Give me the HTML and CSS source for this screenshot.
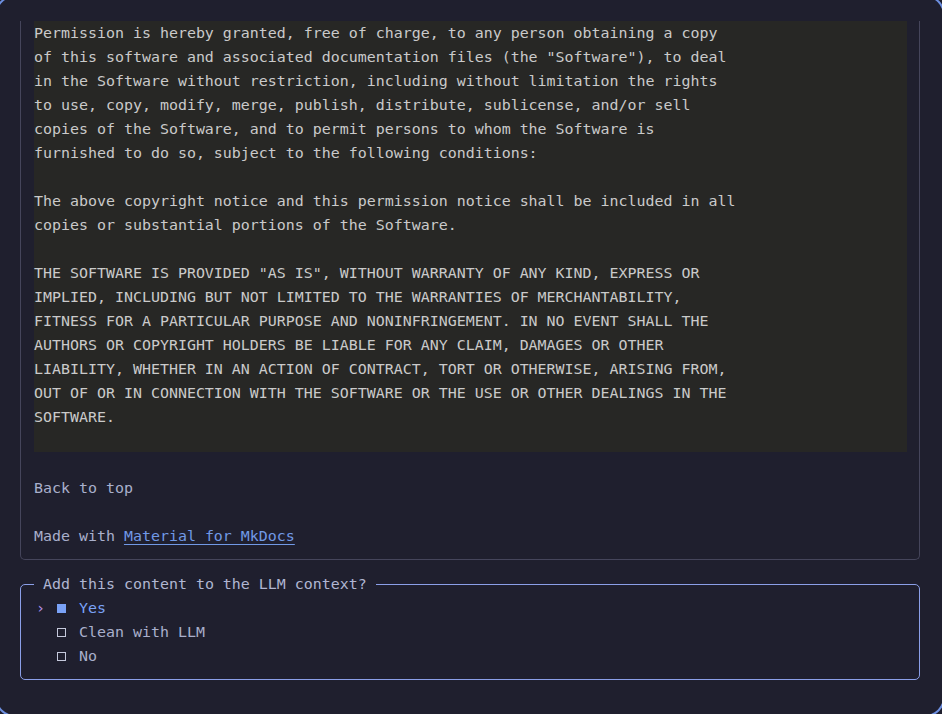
FILE: index.html
```html
<!DOCTYPE html>
<html>
<head>
<meta charset="utf-8">
<link rel="stylesheet" href="styles.css">
</head>
<body>
<div class="screen">
  <div class="panel">
<pre class="code">Permission is hereby granted, free of charge, to any person obtaining a copy
of this software and associated documentation files (the "Software"), to deal
in the Software without restriction, including without limitation the rights
to use, copy, modify, merge, publish, distribute, sublicense, and/or sell
copies of the Software, and to permit persons to whom the Software is
furnished to do so, subject to the following conditions:

The above copyright notice and this permission notice shall be included in all
copies or substantial portions of the Software.

THE SOFTWARE IS PROVIDED "AS IS", WITHOUT WARRANTY OF ANY KIND, EXPRESS OR
IMPLIED, INCLUDING BUT NOT LIMITED TO THE WARRANTIES OF MERCHANTABILITY,
FITNESS FOR A PARTICULAR PURPOSE AND NONINFRINGEMENT. IN NO EVENT SHALL THE
AUTHORS OR COPYRIGHT HOLDERS BE LIABLE FOR ANY CLAIM, DAMAGES OR OTHER
LIABILITY, WHETHER IN AN ACTION OF CONTRACT, TORT OR OTHERWISE, ARISING FROM,
OUT OF OR IN CONNECTION WITH THE SOFTWARE OR THE USE OR OTHER DEALINGS IN THE
SOFTWARE.
</pre>
    <p class="line gap">Back to top</p>
    <p class="line gap">Made with <a class="link" href="#">Material for MkDocs</a></p>
  </div>
  <fieldset class="prompt">
    <legend class="legend">Add this content to the LLM context?</legend>
    <div class="option selected">
      <span class="cursor">›</span>
      <span class="box"><span class="check filled"></span></span>
      <span class="label">Yes</span>
    </div>
    <div class="option">
      <span class="cursor"></span>
      <span class="box"><span class="check"></span></span>
      <span class="label">Clean with LLM</span>
    </div>
    <div class="option">
      <span class="cursor"></span>
      <span class="box"><span class="check"></span></span>
      <span class="label">No</span>
    </div>
  </fieldset>
</div>
</body>
</html>
```

FILE: styles.css
```css
html, body {
  margin: 0;
  padding: 0;
  height: 714px;
  overflow: hidden;
  background: #1f1f2e;
}

body {
  font-family: "DejaVu Sans Mono", "Liberation Mono", monospace;
  font-size: 14.95px;
  line-height: 24px;
  color: #a9b1d6;
  position: relative;
}

body::after {
  content: "";
  position: absolute;
  top: -5px;
  left: -5px;
  right: -3px;
  bottom: -3px;
  border: 2px solid #6d8fe0;
  border-radius: 20px;
  pointer-events: none;
}

.screen {
  padding: 21px 22px 0 20px;
}

.panel {
  border: 1px solid #45455b;
  border-top: none;
  border-radius: 0 0 5px 5px;
  padding: 0 12px 11px 13px;
}

.code {
  margin: 0;
  background: #272725;
  color: #cacaca;
  font: inherit;
  line-height: 24px;
  padding-bottom: 23px;
  white-space: pre;
}

.line {
  margin: 0;
  color: #a9afcc;
}

.gap {
  margin-top: 24px;
}

.link {
  color: #7199e6;
  text-decoration: underline;
  text-underline-offset: 3px;
}

.prompt {
  margin: 12px 0 0 0;
  min-width: 0;
  border: 1px solid #8b9fe8;
  border-radius: 5px;
  padding: 0 12px 11px 13px;
}

.legend {
  padding: 0 9px;
  color: #b0b6d2;
  line-height: 24px;
}

.option {
  display: flex;
  align-items: center;
  height: 24px;
  color: #a9afcc;
}

.cursor {
  width: 18px;
  color: #b592e8;
  padding-left: 2px;
  box-sizing: border-box;
}

.box {
  width: 18px;
  display: flex;
  justify-content: flex-end;
  margin-right: 9px;
}

.check {
  width: 7px;
  height: 7px;
  border: 1px solid #c5c9dc;
  margin-right: 4px;
}

.check.filled {
  width: 9px;
  height: 9px;
  border: none;
  background: #7aa2f7;
}

.selected .label {
  color: #7aa2f7;
}
```
